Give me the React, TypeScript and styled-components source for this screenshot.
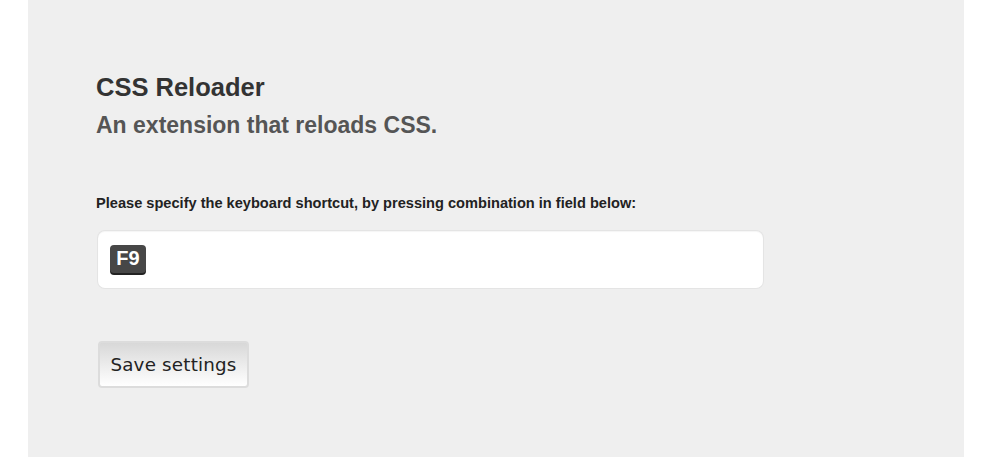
import React from "react";
import styled, { createGlobalStyle } from "styled-components";

const Global = createGlobalStyle`
  html, body { margin: 0; padding: 0; background: #ffffff; }
  body { font-family: "Liberation Sans", Arial, sans-serif; }
`;

const Page = styled.div`
  display: flex;
  height: 457px;
  padding-left: 28px;
`;

const Panel = styled.main`
  width: 936px;
  background: #efefef;
  box-sizing: border-box;
  padding: 72px 0 0 68px;
  display: flex;
  flex-direction: column;
`;

const Title = styled.h1`
  margin: 0;
  font-size: 25.5px;
  line-height: 30px;
  font-weight: bold;
  color: #333333;
`;

const Subtitle = styled.h2`
  margin: 9px 0 0;
  font-size: 23px;
  line-height: 28px;
  font-weight: bold;
  color: #555555;
`;

const Label = styled.label`
  margin-top: 56px;
  font-size: 14.6px;
  line-height: 17px;
  font-weight: bold;
  color: #222222;
`;

const ShortcutField = styled.div`
  margin: 19px 0 0 2px;
  width: 665px;
  height: 57px;
  box-sizing: border-box;
  background: #ffffff;
  border-radius: 7px;
  box-shadow: 0 0 0 1px #e4e4e4, inset 0 1px 1px rgba(0,0,0,0.04);
  display: flex;
  align-items: center;
  padding: 0 12px 1px;
`;

const Key = styled.span`
  display: inline-flex;
  align-items: center;
  justify-content: center;
  width: 36px;
  height: 28px;
  box-sizing: border-box;
  background: #474747;
  border-radius: 4px;
  box-shadow: 0 2px 0 #222222;
  color: #ffffff;
  font-size: 20px;
  font-weight: bold;
  padding-bottom: 1px;
`;

const SaveButton = styled.button`
  margin: 53px 0 0 2px;
  align-self: flex-start;
  width: 151px;
  height: 47px;
  border: 2px solid #dcdcdc;
  border-radius: 4px;
  background: linear-gradient(#d8d8d8, #ffffff);
  font-family: "DejaVu Sans", Verdana, sans-serif;
  font-size: 18.3px;
  color: #222222;
  padding: 0;
  letter-spacing: 0.2px;
`;

export default function App() {
  return (
    <>
      <Global />
      <Page>
        <Panel>
          <Title>CSS Reloader</Title>
          <Subtitle>An extension that reloads CSS.</Subtitle>
          <Label>Please specify the keyboard shortcut, by pressing combination in field below:</Label>
          <ShortcutField>
            <Key>F9</Key>
          </ShortcutField>
          <SaveButton>Save settings</SaveButton>
        </Panel>
      </Page>
    </>
  );
}
